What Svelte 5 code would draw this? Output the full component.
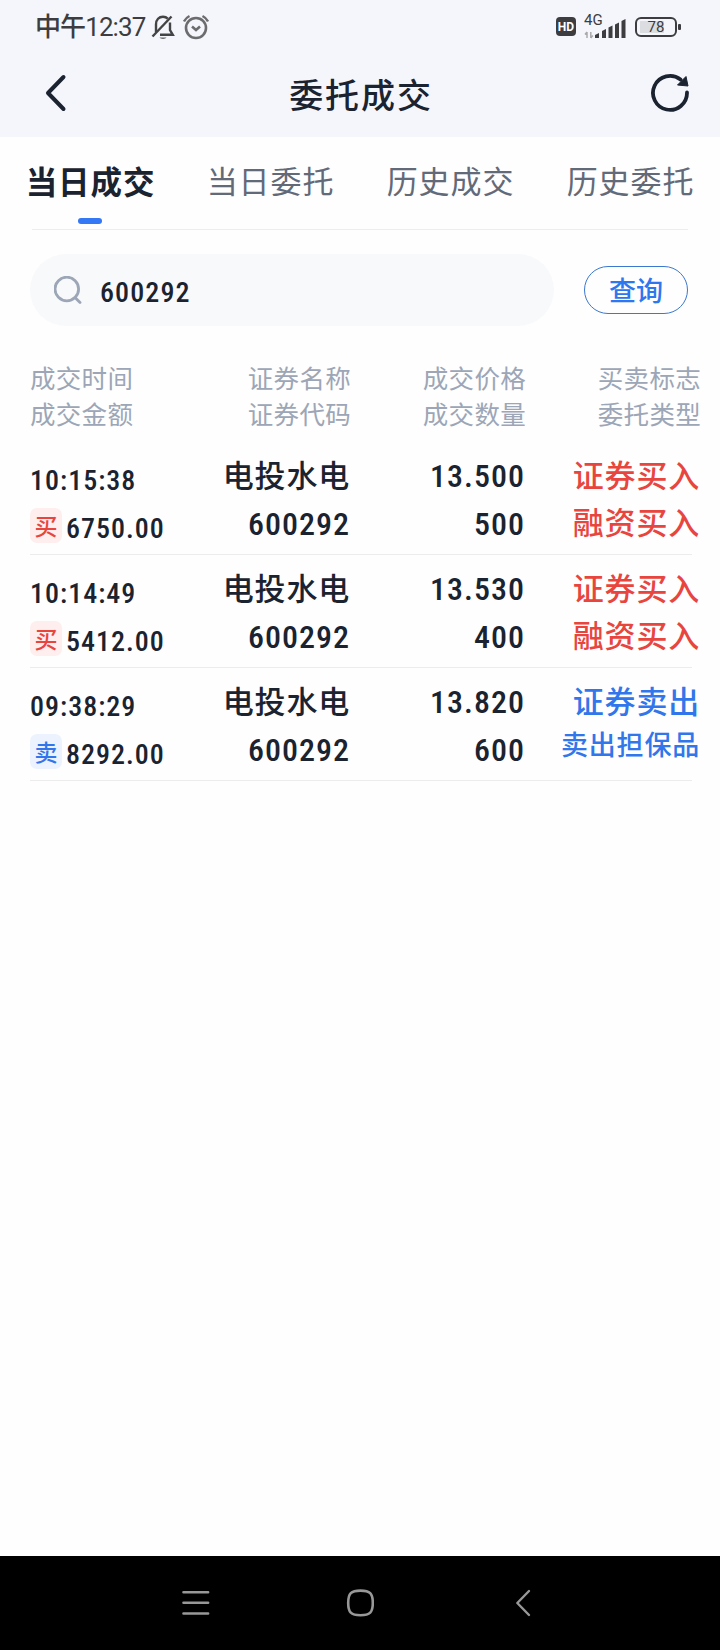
<!-- App.svelte -->
<script>
    let activeTab = 0;
    let keyword = '600292';

    const tabs = ['当日成交', '当日委托', '历史成交', '历史委托'];

    const columns = [
        ['成交时间', '成交金额'],
        ['证券名称', '证券代码'],
        ['成交价格', '成交数量'],
        ['买卖标志', '委托类型']
    ];

    const deals = [
        { time: '10:15:38', amount: '6750.00', side: 'buy', name: '电投水电', code: '600292', price: '13.500', volume: '500', flag: '证券买入', type: '融资买入' },
        { time: '10:14:49', amount: '5412.00', side: 'buy', name: '电投水电', code: '600292', price: '13.530', volume: '400', flag: '证券买入', type: '融资买入' },
        { time: '09:38:29', amount: '8292.00', side: 'sell', name: '电投水电', code: '600292', price: '13.820', volume: '600', flag: '证券卖出', type: '卖出担保品' }
    ];
</script>

<div class="screen">
    <div class="status-bar">
        <span class="clock">中午12:37</span>
        <svg class="bell" width="24" height="26" viewBox="0 0 24 26" fill="none" stroke="#444" stroke-width="2.4">
            <path d="M5 18V10.500C5 5.500 8 2.800 12 2.800c2 0 3.600.7 4.800 1.900M19 8.500V16l2.800 4.800H9" />
            <path d="M1.500 22.500 20.500 2.500" />
            <path d="M8.500 23.500h7c-.8 1.900-6.200 1.900-7 0z" fill="#666" stroke="none" />
        </svg>
        <svg class="alarm" width="26" height="26" viewBox="0 0 26 26" fill="none" stroke="#6c6c6e" stroke-width="2.600">
            <circle cx="13" cy="14" r="10" />
            <path d="M9 12.500l4 3.500 4-3.500" />
            <path d="M1 7.500C2.200 5 4 3.200 6.500 2M25 7.500C23.800 5 22 3.200 19.500 2" stroke-width="2.400" />
        </svg>
        <span class="hd">HD</span>
        <div class="network">
            <span>4G</span>
            <svg width="42" height="20" viewBox="0 0 42 20">
                <path d="M3 19v-6M3 13l-2 2.500M6.800 13v6M6.800 19l2-2.500" fill="none" stroke="#aaa" stroke-width="1.500" />
                <path d="M11 19v-3l4-2v5zM18 19v-7l4-2v9zM24.500 19V8.500l4-2V19zM31 19V5.500l4-2V19zM37.500 19V2l4-2v19z" fill="#3d3d3f" />
            </svg>
        </div>
        <div class="battery"><span>78</span></div>
        <i class="battery-tip"></i>
    </div>

    <header>
        <svg width="24" height="40" viewBox="0 0 24 40" fill="none" stroke="#1b2330" stroke-width="4" stroke-linecap="round" stroke-linejoin="round">
            <path d="M19.500 4 4 20l15.500 16" />
        </svg>
        <h1>委托成交</h1>
        <svg width="40" height="40" viewBox="0 0 40 40">
            <path d="M37 19.500A17 17 0 1 1 30.500 6.500" fill="none" stroke="#1b2330" stroke-width="3.800" stroke-linecap="round" />
            <path d="M36 3.500 38 13 27.500 12z" fill="#1b2330" stroke="#1b2330" stroke-width="1" stroke-linejoin="round" />
        </svg>
    </header>

    <nav class="tabs">
        {#each tabs as tab, i}
            <button class="tab" class:active={i === activeTab} on:click={() => activeTab = i}>{tab}</button>
        {/each}
    </nav>

    <div class="search">
        <label class="search-box">
            <svg width="28" height="28" viewBox="0 0 28 28" fill="none" stroke="#9ca6b6" stroke-width="2.800" stroke-linecap="round">
                <circle cx="12.800" cy="13" r="11.800" />
                <path d="M21.500 22l4.500 4.500" />
            </svg>
            <input class="num" bind:value={keyword} />
        </label>
        <button class="query">查询</button>
    </div>

    <div class="row head">
        {#each columns as [top, bottom]}
            <div class="cell"><span>{top}</span><span>{bottom}</span></div>
        {/each}
    </div>

    <div class="list">
        {#each deals as deal}
            <div class="row deal {deal.side}">
                <div class="cell first num">
                    <span>{deal.time}</span>
                    <span class="amount"><b class="badge">{deal.side === 'buy' ? '买' : '卖'}</b>{deal.amount}</span>
                </div>
                <div class="cell"><span class="name">{deal.name}</span><span class="num">{deal.code}</span></div>
                <div class="cell num"><span>{deal.price}</span><span>{deal.volume}</span></div>
                <div class="cell flag">
                    <span>{deal.flag}</span>
                    <span class:long={deal.type.length > 4}>{deal.type}</span>
                </div>
            </div>
        {/each}
    </div>

    <footer>
        <svg width="28" height="28" viewBox="0 0 28 28" stroke="#989898" stroke-width="2.600" stroke-linecap="round">
            <path d="M1.500 3.200h24.600M1.500 13.800h24.600M1.500 24.500h24.600" />
        </svg>
        <svg width="28" height="28" viewBox="0 0 28 28" fill="none" stroke="#989898" stroke-width="2.600">
            <path d="M14.500 1.600c9.500 0 12.300 2.800 12.300 12.300S24 26.200 14.500 26.200 2.200 23.400 2.200 13.900 5 1.600 14.500 1.600z" />
        </svg>
        <svg width="28" height="28" viewBox="0 0 28 28" fill="none" stroke="#989898" stroke-width="2.400" stroke-linecap="round" stroke-linejoin="round">
            <path d="M19 2 7.300 14 19 26" />
        </svg>
    </footer>
</div>

<style>
    :global(body) {
        background: #fff;
    }

    .screen {
        display: flex;
        flex-direction: column;
        width: 720px;
        height: 1650px;
        overflow: hidden;
        background: #fefefe;
        color: #1b2330;
        font-family: "Noto Sans CJK SC", sans-serif;
    }

    button {
        padding: 0;
        border: none;
        background: none;
        font-family: inherit;
    }

    .num {
        font-family: Roboto, "Noto Sans CJK SC", sans-serif;
        font-weight: 500;
        font-stretch: 75%; /* condensed digits */
    }

    .status-bar {
        display: flex;
        align-items: center;
        height: 53px;
        padding: 0 39px 0 35px;
        background: #f4f6fb;
        color: #3d3d3f;
    }

    .clock {
        width: 116px;
        margin-top: -4px;
        font-family: Roboto, "Noto Sans CJK SC", sans-serif;
        font-size: 26px;
        font-weight: 450;
        letter-spacing: -0.9px;
        white-space: nowrap;
    }

    .alarm {
        margin-left: 8px;
    }

    .hd {
        width: 20px;
        height: 19px;
        margin-left: auto;
        border-radius: 4px;
        background: #3d3d3f;
        color: #fff;
        font: 700 12px/20px Roboto, sans-serif;
        text-align: center;
    }

    .network {
        display: grid;
        margin-left: 8px;
        height: 24px;
        width: 42px;
    }

    .network span {
        grid-area: 1 / 1;
        font: 15px/15px Roboto, sans-serif;
        margin-top: -2px;
    }

    .network svg {
        grid-area: 1 / 1;
        align-self: end;
    }

    .battery {
        box-sizing: border-box;
        width: 42px;
        height: 20px;
        margin-left: 9px;
        border: 2px solid #3d3d3f;
        border-radius: 6px;
        background: linear-gradient(#dcdde1, #dcdde1) 3px 2px / 24px 12px no-repeat;
        font: 15px/17px Roboto, sans-serif;
        text-align: center;
    }

    .battery-tip {
        width: 3px;
        height: 6px;
        margin-left: 1px;
        border-radius: 1px;
        background: #3d3d3f;
    }

    header {
        display: flex;
        align-items: center;
        justify-content: space-between;
        box-sizing: border-box;
        height: 84px;
        padding: 0 30px 4px 44px;
        background: #f4f6fb;
    }

    h1 {
        margin: 0 0 0 4px;
        font-size: 34px;
        font-weight: 500;
        letter-spacing: 1.900px;
    }

    .tabs {
        display: grid;
        grid-template-columns: repeat(4, 180px);
        height: 93px;
        background: linear-gradient(#ededed, #ededed) 32px 92px / 656px 1px no-repeat;
    }

    .tab {
        display: flex;
        flex-direction: column;
        align-items: center;
        padding: 20px 0 0 1px;
        color: #626a79;
        font-size: 31px;
        line-height: 46px;
        letter-spacing: 0.9px;
    }

    .active {
        color: #1b2330;
        font-size: 31.500px;
        font-weight: 700;
    }

    .active::after {
        content: '';
        width: 24px;
        height: 6px;
        margin: 15px 1px 0 0;
        border-radius: 3px;
        background: #3478f6;
    }

    .search {
        display: flex;
        align-items: center;
        justify-content: space-between;
        height: 72px;
        padding: 24px 32px 0 30px;
    }

    .search-box {
        display: flex;
        align-items: center;
        box-sizing: border-box;
        width: 524px;
        height: 72px;
        padding-left: 24px;
        border-radius: 36px;
        background: #f8f9fb;
    }

    input {
        width: 300px;
        margin: 4px 0 0 18px;
        padding: 0;
        border: none;
        outline: none;
        background: none;
        color: #1b2330;
        font-size: 28px;
        letter-spacing: 1.100px;
    }

    .query {
        box-sizing: border-box;
        width: 104px;
        height: 48px;
        border: 1px solid #3b78cf;
        border-radius: 24px;
        color: #2f77ee;
        font-size: 27px;
        font-weight: 500;
        line-height: 46px;
    }

    .row {
        display: grid;
        grid-template-columns: 145px repeat(3, 175px);
        margin-left: 30px;
    }

    .cell {
        display: flex;
        flex-direction: column;
        align-items: flex-end;
        white-space: nowrap;
    }

    .cell:first-child {
        align-items: flex-start;
    }

    .head {
        grid-template-columns: 146px repeat(3, 175px);
        height: 83px;
        padding-top: 33px;
        color: #9ca6b6;
        font-size: 25.500px;
        line-height: 36px;
        letter-spacing: 0.3px;
    }

    .list {
        flex: 1;
    }

    .deal {
        height: 112px;
        width: 662px;
        border-bottom: 1px solid #ececec;
        font-size: 31px;
        font-weight: 500;
        letter-spacing: 0.8px;
        line-height: 47.500px;
    }

    .deal .cell {
        padding-top: 11px;
    }

    .deal .flag {
        padding-top: 8px;
        line-height: 47px;
    }

    .deal .name {
        margin: -3px 0 3px;
    }

    .deal .num {
        font-size: 32px;
        letter-spacing: 1px;
    }

    .deal .first {
        padding-top: 15px;
        font-size: 28px;
        letter-spacing: 1px;
    }

    .amount {
        display: flex;
        align-items: center;
    }

    .badge {
        width: 32px;
        height: 35px;
        margin: -5px 4px 0 0;
        border-radius: 7px;
        font: 500 23px/34px "Noto Sans CJK SC", sans-serif;
        letter-spacing: 0;
        text-align: center;
    }

    .buy .badge {
        background: #feeeee;
    }

    .sell .badge {
        background: #edf3fe;
    }

    .buy .badge,
    .buy .flag {
        color: #e8453f;
    }

    .sell .badge,
    .sell .flag {
        color: #3176ea;
    }

    .flag .long {
        font-size: 27px;
        line-height: 42px;
        letter-spacing: 0.8px;
    }

    footer {
        display: flex;
        align-items: center;
        justify-content: space-between;
        box-sizing: border-box;
        height: 94px;
        padding: 0 182px;
        background: #000;
    }
</style>
